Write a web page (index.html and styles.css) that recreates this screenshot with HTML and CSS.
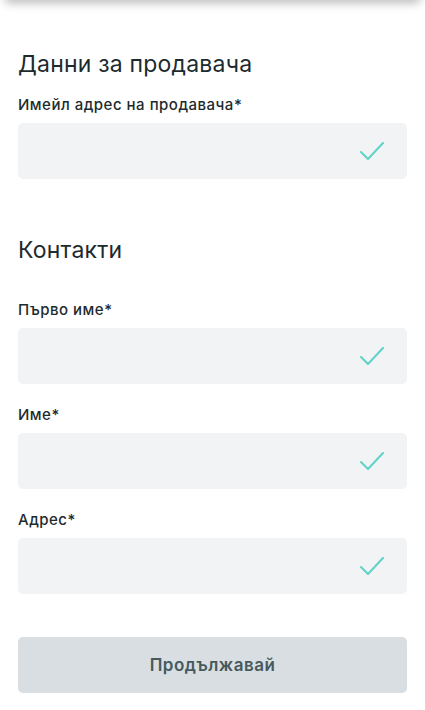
FILE: index.html
```html
<!DOCTYPE html>
<html lang="bg">
<head>
<meta charset="utf-8">
<title>Данни за продавача</title>
<link rel="stylesheet" href="styles.css">
</head>
<body>
<div class="topbar"></div>
<main class="form">
  <section class="section">
    <h2 class="title">Данни за продавача</h2>
    <div class="field">
      <label class="label">Имейл адрес на продавача*</label>
      <div class="input">
        <svg class="check" viewBox="0 0 24 18" width="24" height="18"><path d="M1 10 L8 17 L23 1"/></svg>
      </div>
    </div>
  </section>
  <section class="section contacts">
    <h2 class="title">Контакти</h2>
    <div class="field first">
      <label class="label">Първо име*</label>
      <div class="input">
        <svg class="check" viewBox="0 0 24 18" width="24" height="18"><path d="M1 10 L8 17 L23 1"/></svg>
      </div>
    </div>
    <div class="field">
      <label class="label">Име*</label>
      <div class="input">
        <svg class="check" viewBox="0 0 24 18" width="24" height="18"><path d="M1 10 L8 17 L23 1"/></svg>
      </div>
    </div>
    <div class="field">
      <label class="label">Адрес*</label>
      <div class="input">
        <svg class="check" viewBox="0 0 24 18" width="24" height="18"><path d="M1 10 L8 17 L23 1"/></svg>
      </div>
    </div>
  </section>
  <button class="submit" type="button">Продължавай</button>
</main>
</body>
</html>
```
FILE: styles.css
```css
html, body {
  margin: 0;
  padding: 0;
  background: #ffffff;
}
body {
  font-family: Inter, "Noto Sans", sans-serif;
  color: #1d2b2e;
  overflow: hidden;
}
.topbar {
  height: 10px;
  margin: -10px 4px 0;
  background: #ffffff;
  border-radius: 10px;
  box-shadow: 0 3px 10px rgba(0, 0, 0, 0.28);
}
.form {
  padding: 49px 18px 0;
  display: flex;
  flex-direction: column;
}
.section {
  display: flex;
  flex-direction: column;
}
.title {
  margin: 0;
  font-size: 23px;
  line-height: 30px;
  font-weight: 400;
  letter-spacing: 0.2px;
  color: #1d2b2e;
}
.contacts {
  margin-top: 56px;
}
.field {
  display: flex;
  flex-direction: column;
  margin-top: 21px;
}
.section .title + .field {
  margin-top: 16px;
}
.contacts .title + .field {
  margin-top: 35px;
}
.label {
  font-size: 15px;
  line-height: 20px;
  font-weight: 500;
  letter-spacing: 0.5px;
  color: #1d2b2e;
  margin-bottom: 8px;
}
.input {
  height: 56px;
  background: #f2f3f5;
  border-radius: 5px;
  display: flex;
  align-items: center;
  justify-content: flex-end;
  padding-right: 23px;
}
.check {
  display: block;
  fill: none;
  stroke: #5ed3c6;
  stroke-width: 2;
  stroke-linecap: round;
  stroke-linejoin: round;
}
.submit {
  margin-top: 43px;
  height: 56px;
  border: none;
  border-radius: 5px;
  background: #d8dee1;
  color: #465a5e;
  font-family: Inter, "Noto Sans", sans-serif;
  font-size: 17px;
  font-weight: 600;
  letter-spacing: 0.5px;
  cursor: pointer;
}
```
